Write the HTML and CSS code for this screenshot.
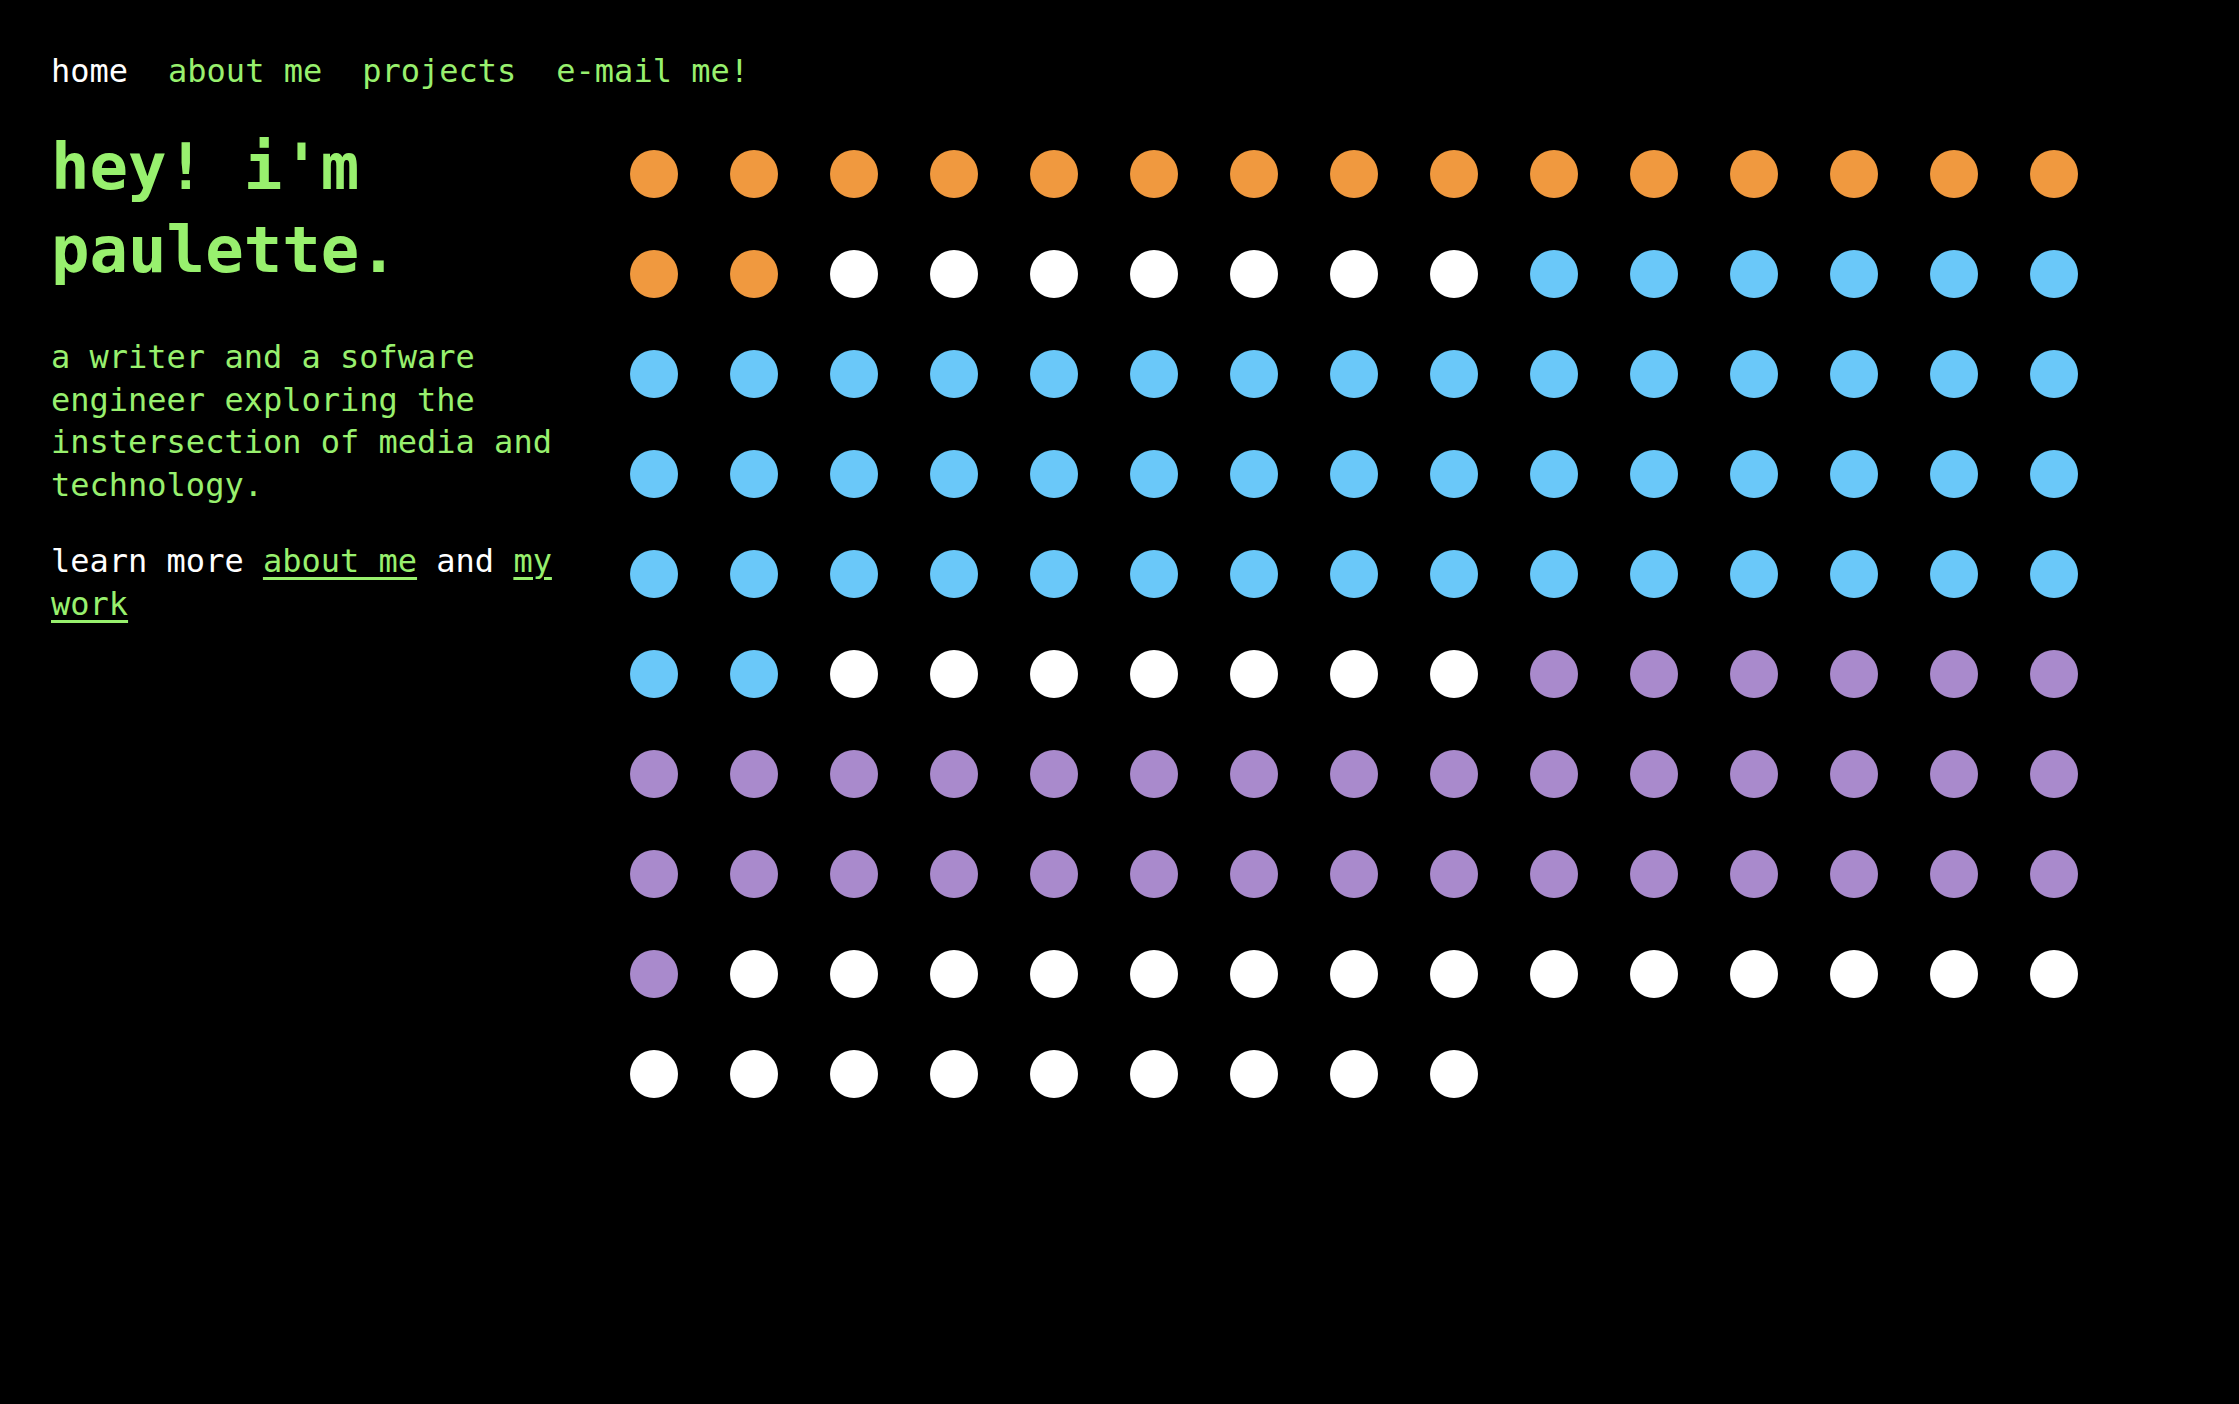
FILE: index.html
```html
<!DOCTYPE html>
<html lang="en">
<head>
<meta charset="utf-8">
<title>paulette</title>
<link rel="stylesheet" href="styles.css">
</head>
<body>
<div class="page">
  <nav class="nav">
    <a class="nav-link active" href="#">home</a>
    <a class="nav-link" href="#">about me</a>
    <a class="nav-link" href="#">projects</a>
    <a class="nav-link" href="#">e-mail me!</a>
  </nav>
  <main class="main">
    <section class="intro">
      <h1 class="title">hey! i'm paulette.</h1>
      <p class="lede">a writer and a sofware engineer exploring the instersection of media and technology.</p>
      <p class="more">learn more <a href="#">about me</a> and <a href="#">my work</a></p>
    </section>
    <div class="dots" id="dots"></div>
  </main>
</div>
<script src="script.js"></script>
</body>
</html>
```
FILE: styles.css
```css
html, body {
  margin: 0;
  padding: 0;
  background: #000;
}
body {
  font-family: "DejaVu Sans Mono", "Liberation Mono", monospace;
  color: #98f06e;
  min-height: 1404px;
}
.page {
  padding: 49px 51px;
}
.nav {
  display: flex;
  gap: 40px;
  font-size: 32px;
  line-height: 43px;
  margin-top: 1px;
}
.nav-link {
  color: #98f06e;
  text-decoration: none;
}
.nav-link.active {
  color: #fff;
}
.main {
  display: flex;
  align-items: flex-start;
  margin-top: 33px;
}
.intro {
  width: 520px;
  flex: none;
}
.title {
  margin: 0;
  font-size: 64px;
  line-height: 83px;
  font-weight: bold;
  color: #98f06e;
}
.lede {
  margin: 44px 0 0;
  font-size: 32px;
  line-height: 42.5px;
}
.more {
  margin: 34px 0 0;
  font-size: 32px;
  line-height: 42.5px;
  color: #fff;
}
.more a {
  color: #98f06e;
  text-decoration: underline;
  text-decoration-thickness: 3px;
  text-underline-offset: 5px;
}
.dots {
  margin-left: 59px;
  margin-top: 24px;
  display: grid;
  grid-template-columns: repeat(15, 48px);
  gap: 52px;
}
.dot {
  width: 48px;
  height: 48px;
  border-radius: 50%;
}
.dot.o { background: #f0993f; }
.dot.w { background: #fff; }
.dot.b { background: #6ac8f9; }
.dot.p { background: #a98acc; }
```
FILE: script.js
```js
(function () {
  var groups = [["o", 17], ["w", 7], ["b", 53], ["w", 7], ["p", 37], ["w", 23]];
  var box = document.getElementById("dots");
  groups.forEach(function (g) {
    for (var i = 0; i < g[1]; i++) {
      var d = document.createElement("span");
      d.className = "dot " + g[0];
      box.appendChild(d);
    }
  });
})();
```
